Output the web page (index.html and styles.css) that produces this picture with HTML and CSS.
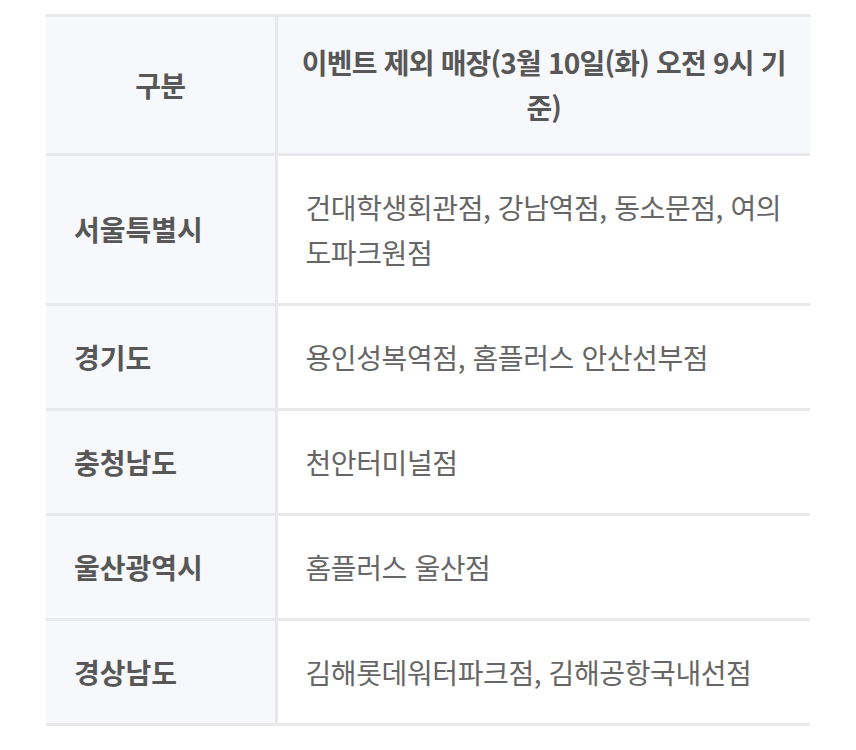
FILE: index.html
```html
<!DOCTYPE html>
<html lang="ko">
<head>
<meta charset="utf-8">
<link rel="stylesheet" href="styles.css">
</head>
<body>
<table class="stores">
  <colgroup>
    <col class="col-region">
    <col class="col-stores">
  </colgroup>
  <thead>
    <tr>
      <th>구분</th>
      <th>이벤트 제외 매장(3월 10일(화) 오전 9시 기준)</th>
    </tr>
  </thead>
  <tbody>
    <tr><th>서울특별시</th><td>건대학생회관점, 강남역점, 동소문점, 여의도파크원점</td></tr>
    <tr><th>경기도</th><td>용인성복역점, 홈플러스 안산선부점</td></tr>
    <tr><th>충청남도</th><td>천안터미널점</td></tr>
    <tr><th>울산광역시</th><td>홈플러스 울산점</td></tr>
    <tr><th>경상남도</th><td>김해롯데워터파크점, 김해공항국내선점</td></tr>
  </tbody>
</table>
</body>
</html>
```

FILE: styles.css
```css
html, body {
  margin: 0;
  padding: 0;
  background: #ffffff;
}
body {
  padding: 14px 0 0 46px;
  font-family: "Noto Sans CJK KR", "Noto Sans", sans-serif;
  color: #666;
}
.stores {
  width: 764px;
  border-collapse: collapse;
  table-layout: fixed;
  font-size: 28px;
  line-height: 45px;
}
.col-region { width: 230px; }
.col-stores { width: 534px; }
.stores th,
.stores td {
  border-top: 3px solid #e9e9eb;
  border-bottom: 3px solid #e9e9eb;
  vertical-align: middle;
}
.stores th {
  background: #f7f8fb;
  color: #575757;
  font-weight: 700;
  text-align: left;
  padding: 28.5px 28px;
}
.stores td {
  background: #fff;
  padding: 28.5px 28px;
  letter-spacing: -0.4px;
}
.stores tr > :first-child {
  border-right: 3px solid #e9e9eb;
}
.stores thead th {
  text-align: center;
  padding: 23px 18px;
  letter-spacing: -0.8px;
}
```
